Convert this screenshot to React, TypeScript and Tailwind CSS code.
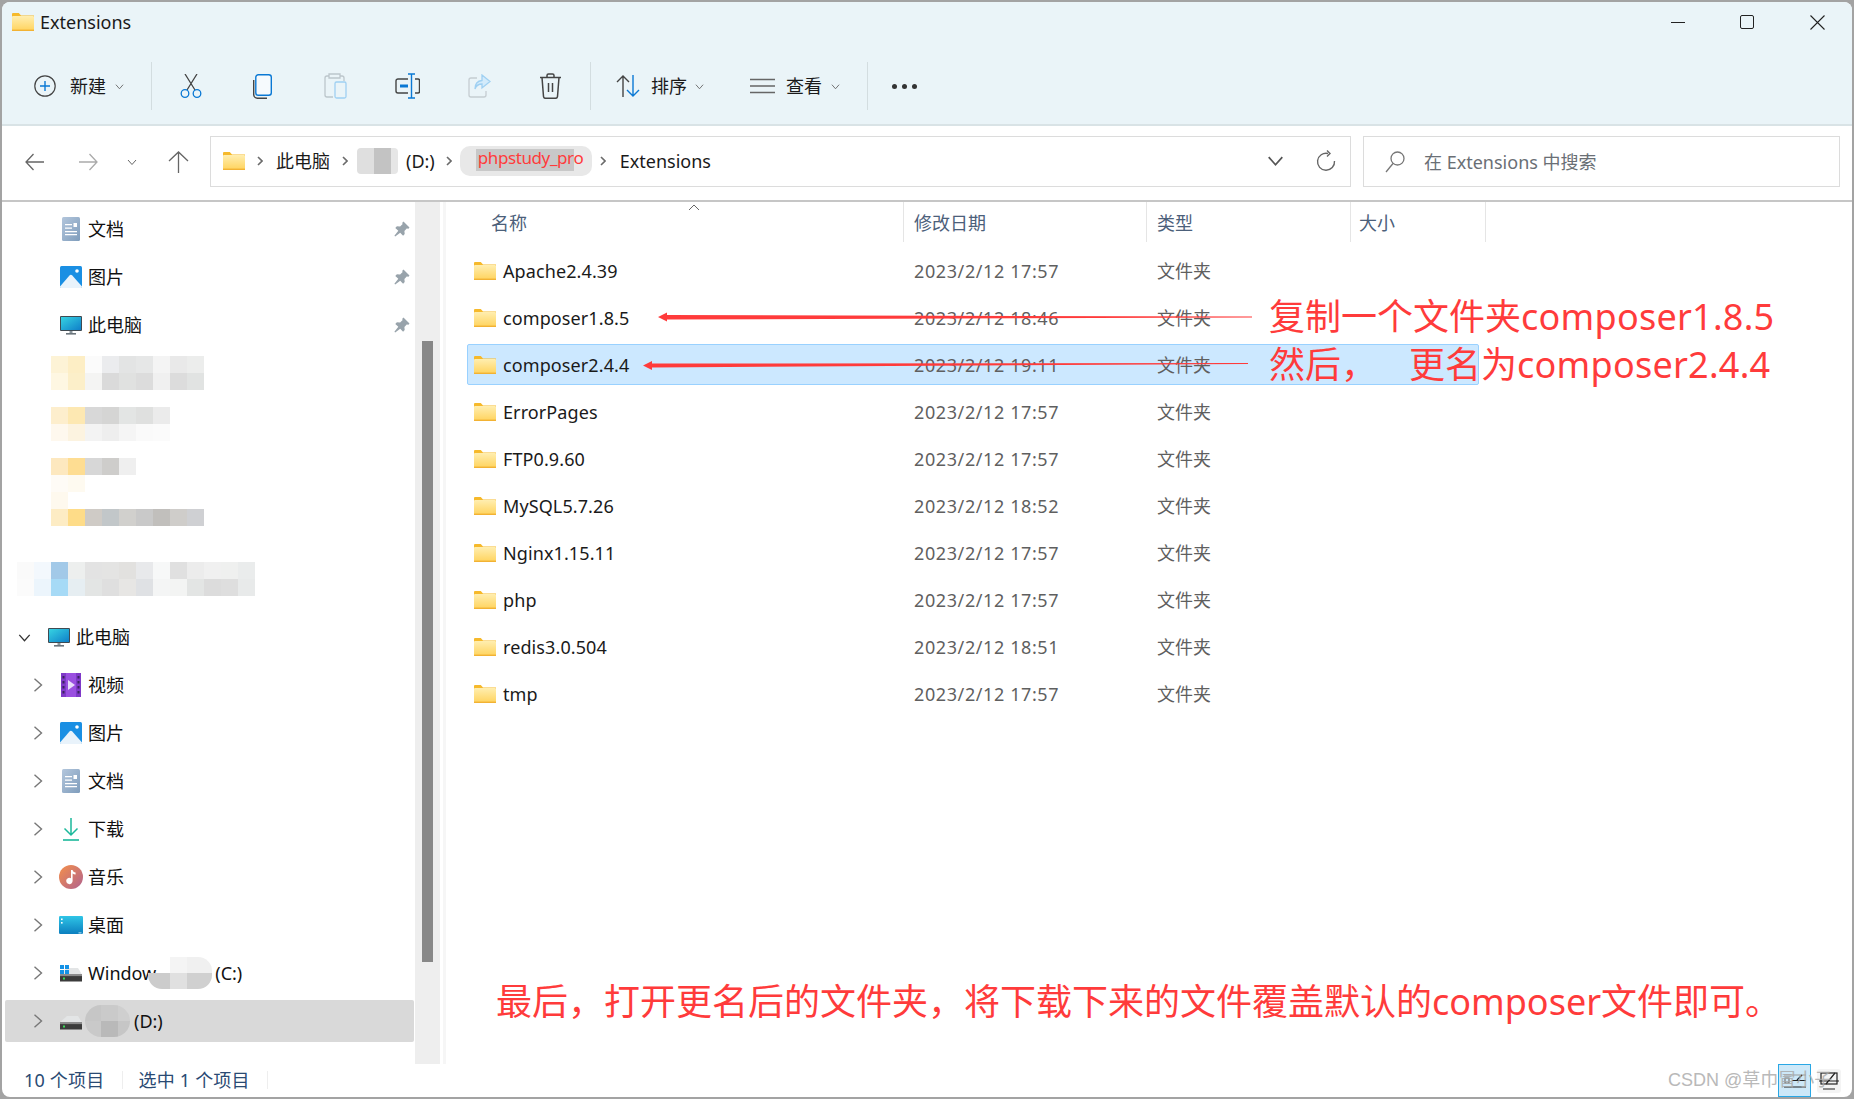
import React from 'react';

const folders = [
  { name: 'Apache2.4.39', date: '2023/2/12 17:57' },
  { name: 'composer1.8.5', date: '2023/2/12 18:46' },
  { name: 'composer2.4.4', date: '2023/2/12 19:11', selected: true },
  { name: 'ErrorPages', date: '2023/2/12 17:57' },
  { name: 'FTP0.9.60', date: '2023/2/12 17:57' },
  { name: 'MySQL5.7.26', date: '2023/2/12 18:52' },
  { name: 'Nginx1.15.11', date: '2023/2/12 17:57' },
  { name: 'php', date: '2023/2/12 17:57' },
  { name: 'redis3.0.504', date: '2023/2/12 18:51' },
  { name: 'tmp', date: '2023/2/12 17:57' },
];

const FolderIcon = ({ className }: { className: string }) => (
  <svg viewBox="0 0 22 18" className={className}>
    <defs>
      <linearGradient id="fld" x1="0" y1="0" x2="0" y2="1">
        <stop offset="0" stopColor="#ffeeb0" />
        <stop offset="1" stopColor="#ffd35c" />
      </linearGradient>
    </defs>
    <path d="M0 1.2C0 .5.5 0 1.2 0h5.600L9 2.500h13V5H0z" fill="#f6b92b" />
    <rect x="0" y="3" width="22" height="15" rx="1" fill="url(#fld)" />
    <rect x="0" y="16.600" width="22" height="1.400" fill="#f2b233" />
  </svg>
);

const Chevron = ({ dir, className }: { dir: 'down' | 'right'; className: string }) => (
  <svg viewBox="0 0 10 10" fill="none" stroke="currentColor" strokeWidth="1" className={className}>
    {dir === 'down' ? <path d="M1 3l4 4.500L9 3" /> : <path d="M2.500 .5L7.500 5l-5 4.500" />}
  </svg>
);

const Crumb = ({ className }: { className: string }) => (
  <svg viewBox="0 0 6 10" fill="none" stroke="#6b6b6b" strokeWidth="1.600" className={`w-[6px] h-[10px] ${className}`}>
    <path d="M1 1l4 4-4 4" />
  </svg>
);

const Pin = () => (
  <svg viewBox="0 0 16 16" className="w-[16px] h-[16px] ml-auto" fill="#98a3ab">
    <path d="M9.500 .5l6 6-1.400 1.400-1.100-.6-2.600 2.600.3 3.200-1.600 1.600-2.900-3L1.200 15.600.4 14.800l3.900-5-3-2.900 1.600-1.600 3.200.3L8.700 3 8.100 1.900z" />
  </svg>
);

const DocIcon = () => (
  <svg viewBox="0 0 18 24" className="w-[18px] h-[24px]">
    <defs>
      <linearGradient id="doc" x1="0" y1="0" x2="1" y2="1">
        <stop offset="0" stopColor="#b3c6dc" />
        <stop offset="1" stopColor="#7f9dbc" />
      </linearGradient>
    </defs>
    <rect width="18" height="24" rx="1.500" fill="url(#doc)" />
    <path d="M3 7h7v1.300H3zM3 10.500h7v1.300H3zM3 14h12v1.300H3zM3 17h12v1.300H3z" fill="#fff" />
    <rect x="11.500" y="6" width="3.500" height="4" fill="#fff" />
  </svg>
);

const PicIcon = () => (
  <svg viewBox="0 0 22 22" className="w-[22px] h-[22px]">
    <rect width="22" height="22" rx="1.500" fill="#1a8fe3" />
    <path d="M0 20.500L9.500 9.500c.8-.9 2-.9 2.800 0L22 20.500V21a1 1 0 01-1 1H1a1 1 0 01-1-1z" fill="#e9f3fb" />
    <circle cx="17" cy="5" r="1.800" fill="#fff" />
  </svg>
);

const PcIcon = () => (
  <svg viewBox="0 0 22 19" className="w-[22px] h-[19px]">
    <defs>
      <linearGradient id="pc" x1="0" y1="0" x2="1" y2="1">
        <stop offset="0" stopColor="#36d3e2" />
        <stop offset="1" stopColor="#0f7fc9" />
      </linearGradient>
    </defs>
    <rect width="22" height="15" rx="1" fill="#3f4a52" />
    <rect x="1" y="1" width="20" height="13" fill="url(#pc)" />
    <rect x="9.500" y="15" width="3" height="2" fill="#8a959c" />
    <rect x="6" y="17" width="10" height="1.600" fill="#6b757c" />
  </svg>
);

const VideoIcon = () => (
  <svg viewBox="0 0 20 24" className="w-[20px] h-[24px]">
    <rect width="20" height="24" rx="1.500" fill="#9a4fe0" />
    <path d="M0 0h5v24H0zM15 0h5v24h-5z" fill="#7f39c8" />
    <path d="M1.500 3h2v2.500h-2zM1.500 8h2v2.500h-2zM1.500 13h2v2.500h-2zM1.500 18h2v2.500h-2zM16.500 3h2v2.500h-2zM16.500 8h2v2.500h-2zM16.500 13h2v2.500h-2zM16.500 18h2v2.500h-2z" fill="#3c2360" />
    <path d="M7 7l7 5-7 5z" fill="#e9dcfb" />
  </svg>
);

const DownloadIcon = () => (
  <svg viewBox="0 0 18 24" fill="none" stroke="#1bb89a" strokeWidth="1.500" className="w-[18px] h-[24px]">
    <path d="M9 1v17M2.500 11.500L9 18l6.500-6.500" />
    <path d="M1 23h16" strokeWidth="1.600" />
  </svg>
);

const MusicIcon = () => (
  <svg viewBox="0 0 24 24" className="w-[24px] h-[24px]">
    <defs>
      <linearGradient id="mus" x1="0" y1="0" x2="1" y2="1">
        <stop offset="0" stopColor="#f5904a" />
        <stop offset="1" stopColor="#b0628f" />
      </linearGradient>
    </defs>
    <circle cx="12" cy="12" r="12" fill="url(#mus)" />
    <path d="M12 5h1.600c.2 1.600 1.400 2.400 3 2.600v1.800c-1.200 0-2.200-.4-3-1v7.600a3.200 3.200 0 11-1.600-2.800z" fill="#fff" />
  </svg>
);

const DesktopIcon = () => (
  <svg viewBox="0 0 24 18" className="w-[24px] h-[18px]">
    <defs>
      <linearGradient id="dsk" x1="0" y1="0" x2="0" y2="1">
        <stop offset="0" stopColor="#2fc5e6" />
        <stop offset="1" stopColor="#0c7fbf" />
      </linearGradient>
    </defs>
    <rect width="24" height="18" rx="1.200" fill="url(#dsk)" />
    <rect x="2" y="2.500" width="1.600" height="1.600" fill="#fff" />
    <rect x="2" y="6" width="1.600" height="1.600" fill="#fff" />
    <rect x="19.500" y="16.400" width="3" height="1" fill="#bfe6f5" />
  </svg>
);

const DriveIcon = ({ windows }: { windows?: boolean }) => (
  <svg viewBox="0 0 22 17" className="w-[22px] h-[17px]">
    <path d="M3 6.500L7 3h11l4 6.500v1H0v-1z" fill="#e3e5e6" />
    <rect y="9.500" width="22" height="7" fill="#3b3b3b" />
    <rect y="9.500" width="22" height="1.600" fill="#8a8a8a" />
    <rect x="3" y="12.500" width="2" height="2" fill="#3bdc58" />
    {windows && <path d="M0 0h4v4H0zM5 0h4v4H5zM0 5h4v4H0zM5 5h4v4H5z" fill="#1492e6" />}
  </svg>
);

const Mosaic = ({ rows, className }: { rows: string[][]; className?: string }) => (
  <div className={className}>
    {rows.map((row, i) => (
      <div key={i} className="flex h-[17px]">
        {row.map((c, j) => (
          <div key={j} className="w-[17px] h-[17px]" style={{ backgroundColor: c }} />
        ))}
      </div>
    ))}
  </div>
);

const NavItem = ({ icon, label, pinned }: { icon: React.ReactNode; label: string; pinned?: boolean }) => (
  <div className="h-[48px] flex items-center pl-[57px] pr-[5px]">
    <div className="w-[24px] flex justify-center">{icon}</div>
    <span className="ml-[5px] text-[#111]">{label}</span>
    {pinned && <Pin />}
  </div>
);

const TreeItem = ({ icon, children, active }: { icon: React.ReactNode; children: React.ReactNode; active?: boolean }) => (
  <div className="h-[48px] flex items-center">
    <div className={`ml-[3px] w-[409px] h-[42px] flex items-center pl-[26px] rounded-[2px] ${active ? 'bg-[#d9d9d9]' : ''}`}>
      <Chevron dir="right" className="w-[14px] h-[14px] text-[#777]" />
      <div className="ml-[14px] w-[24px] flex justify-center">{icon}</div>
      <div className="ml-[5px] flex items-center text-[#111]">{children}</div>
    </div>
  </div>
);

const Sep = () => <div className="w-px h-[48px] bg-[#d3dde0]" />;

export default function App() {
  return (
    <div className="relative w-[1854px] h-[1099px] overflow-hidden bg-[#a3a3a3] p-[2px] font-['Noto_Sans','Noto_Sans_CJK_SC',sans-serif] text-[18px] leading-none">
      <div className="h-full rounded-[8px] overflow-hidden bg-white flex flex-col">
        {/* title + command bar */}
        <div className="h-[124px] bg-[#eaf4f8] border-b-2 border-[#d9e3e6] flex flex-col shrink-0">
          <div className="h-[40px] flex items-center pl-[10px]">
            <FolderIcon className="w-[22px] h-[18px]" />
            <span className="ml-[6px] text-[#1a1a1a]">Extensions</span>
            <div className="ml-auto flex items-center text-[#222]">
              <div className="w-[14px] h-px bg-[#222]" />
              <div className="ml-[55px] w-[14px] h-[14px] border-[1.5px] border-[#222] rounded-[2px]" />
              <svg viewBox="0 0 15 15" stroke="#222" strokeWidth="1.100" className="ml-[56px] mr-[27px] w-[15px] h-[15px]">
                <path d="M.5.5l14 14M14.500.5l-14 14" />
              </svg>
            </div>
          </div>
          <div className="flex-1 flex items-center pl-[32px] pt-[6px]">
            <svg viewBox="0 0 22 22" className="w-[22px] h-[22px]" fill="none">
              <circle cx="11" cy="11" r="10.200" stroke="#444" strokeWidth="1.200" />
              <path d="M11 6v10M6 11h10" stroke="#0a78d4" strokeWidth="1.400" />
            </svg>
            <span className="ml-[14px] text-[#1a1a1a]">新建</span>
            <Chevron dir="down" className="ml-[9px] w-[9px] h-[9px] text-[#666]" />
            <div className="ml-[27px]"><Sep /></div>
            <svg viewBox="0 0 22 24" fill="none" strokeWidth="1.300" className="ml-[28px] w-[22px] h-[24px]">
              <path d="M5 0l10 16M17 0L7 16" stroke="#444" />
              <circle cx="5" cy="19.500" r="3.800" stroke="#0a78d4" />
              <circle cx="17" cy="19.500" r="3.800" stroke="#0a78d4" />
            </svg>
            <svg viewBox="0 0 19 25" fill="none" strokeWidth="1.400" className="ml-[51px] w-[19px] h-[25px]">
              <rect x="2.800" y=".7" width="15.500" height="20.500" rx="2.500" stroke="#0a78d4" fill="#f6fafd" />
              <path d="M.7 6v14.500c0 2 1.600 3.700 3.700 3.700H14" stroke="#444" />
            </svg>
            <svg viewBox="0 0 23 26" fill="none" strokeWidth="1.300" className="ml-[52px] w-[23px] h-[26px]">
              <path d="M5 3H3a2 2 0 00-2 2v17a2 2 0 002 2h6M16 3h2a2 2 0 012 2v3M5 1h11v4H5z" stroke="#bcc6cb" />
              <rect x="11" y="9" width="11" height="16" rx="1.500" stroke="#9fd0f2" />
            </svg>
            <svg viewBox="0 0 25 26" fill="none" strokeWidth="1.400" className="ml-[48px] w-[25px] h-[26px]">
              <path d="M13 6H3a2 2 0 00-2 2v10a2 2 0 002 2h10M20 6h3a1.500 1.500 0 011.500 1.500v11A1.500 1.500 0 0123 20h-3" stroke="#444" />
              <path d="M16.500 1v24M13 1h7M13 25h7" stroke="#0a78d4" />
              <rect x="5" y="11.500" width="8" height="3" fill="#0a78d4" />
            </svg>
            <svg viewBox="0 0 23 24" fill="none" strokeWidth="1.300" className="ml-[48px] w-[23px] h-[24px]">
              <path d="M9 4H3a2 2 0 00-2 2v15a2 2 0 002 2h13a2 2 0 002-2v-4" stroke="#c5cdd1" />
              <path d="M14 1l8 6.500-8 6.500v-4c-4 0-6 2-7 5 0-5 2-8 7-8.500z" stroke="#9fd0f2" fill="#d3ebfb" />
            </svg>
            <svg viewBox="0 0 23 26" fill="none" stroke="#444" strokeWidth="1.500" className="ml-[48px] w-[23px] h-[26px]">
              <path d="M1 4.500h21M8 4.500V2.500a1.500 1.500 0 011.500-1.500h4a1.500 1.500 0 011.500 1.500v2M3 4.500l1.500 19a2 2 0 002 1.800h10a2 2 0 002-1.800l1.500-19M9.500 10v9M13.500 10v9" />
            </svg>
            <div className="ml-[28px]"><Sep /></div>
            <svg viewBox="0 0 24 24" fill="none" strokeWidth="1.400" className="ml-[25px] w-[24px] h-[24px]">
              <path d="M7 23V2M1 8l6-6 6 6" stroke="#444" />
              <path d="M17 1v21M11 16l6 6 6-6" stroke="#0a78d4" />
            </svg>
            <span className="ml-[11px] text-[#1a1a1a]">排序</span>
            <Chevron dir="down" className="ml-[8px] w-[9px] h-[9px] text-[#666]" />
            <svg viewBox="0 0 25 16" stroke="#666" strokeWidth="1.700" className="ml-[46px] w-[25px] h-[16px]">
              <path d="M0 1.500h25M0 8h25M0 14.500h25" />
            </svg>
            <span className="ml-[11px] text-[#1a1a1a]">查看</span>
            <Chevron dir="down" className="ml-[9px] w-[9px] h-[9px] text-[#666]" />
            <div className="ml-[27px]"><Sep /></div>
            <div className="ml-[24px] flex gap-[5px]">
              <div className="w-[5px] h-[5px] rounded-full bg-[#333]" />
              <div className="w-[5px] h-[5px] rounded-full bg-[#333]" />
              <div className="w-[5px] h-[5px] rounded-full bg-[#333]" />
            </div>
          </div>
        </div>

        {/* address row */}
        <div className="h-[76px] shrink-0 border-b-2 border-[#c6c6c6] flex items-start pt-[10px] pl-[23px]">
          <div className="h-[51px] flex items-center">
            <svg viewBox="0 0 19 18" fill="none" stroke="#666" strokeWidth="1.300" className="w-[19px] h-[18px]">
              <path d="M19 9H1M8.500 1L1 9l7.500 8" />
            </svg>
            <svg viewBox="0 0 19 18" fill="none" stroke="#aaa" strokeWidth="1.300" className="ml-[35px] w-[19px] h-[18px]">
              <path d="M0 9h18M10.500 1L18 9l-7.500 8" />
            </svg>
            <Chevron dir="down" className="ml-[29px] w-[10px] h-[10px] text-[#666]" />
            <svg viewBox="0 0 21 22" fill="none" stroke="#666" strokeWidth="1.300" className="ml-[31px] w-[21px] h-[22px]">
              <path d="M10.500 22V1M1 10l9.500-9L20 10" />
            </svg>
          </div>
          <div className="ml-[21px] w-[1141px] h-[51px] pb-[2px] border border-[#dcdcdc] flex items-center text-[#1a1a1a]">
            <FolderIcon className="ml-[12px] w-[22px] h-[18px]" />
            <Crumb className="ml-[12px]" />
            <span className="ml-[13px]">此电脑</span>
            <Crumb className="ml-[12px]" />
            <div className="ml-[9px] w-[41px] h-[26px] flex">
              <div className="w-[17px] bg-[#dfdfdf] rounded-l-[4px]" />
              <div className="w-[17px] bg-[#c3c3c3]" />
              <div className="w-[7px] bg-[#e6e6e6] rounded-r-[4px]" />
            </div>
            <span className="ml-[8px]">(D:)</span>
            <Crumb className="ml-[11px]" />
            <div className="ml-[8px] w-[132px] h-[30px] rounded-[10px] flex items-center overflow-hidden relative bg-[#e8e8e8]">
              <div className="ml-[16px] w-[98px] h-[22px] bg-[#c8c8c8] mb-[2px]" />
              <span className="absolute left-[18px] top-[3px] text-[#ff3b3b] text-[17px] tracking-[-0.4px]">phpstudy_pro</span>
            </div>
            <Crumb className="ml-[8px]" />
            <span className="ml-[14px]">Extensions</span>
            <Chevron dir="down" className="ml-auto w-[17px] h-[17px] text-[#555]" />
            <svg viewBox="0 0 20 22" fill="none" stroke="#666" strokeWidth="1.400" className="ml-[32px] mr-[14px] w-[20px] h-[22px]">
              <path d="M12 3.500A8.500 8.500 0 1018.500 11M11 .5l3 3-3 3" />
            </svg>
          </div>
          <div className="ml-[12px] w-[477px] h-[51px] border border-[#dcdcdc] flex items-center pl-[21px] text-[#6a6f75]">
            <svg viewBox="0 0 20 22" fill="none" stroke="#777" strokeWidth="1.300" className="w-[20px] h-[22px]">
              <circle cx="12.500" cy="7.500" r="6.500" />
              <path d="M8 12.500L1 21" />
            </svg>
            <span className="ml-[19px]">在 Extensions 中搜索</span>
          </div>
        </div>

        {/* sidebar + file list */}
        <div className="flex-1 flex min-h-0">
          <div className="w-[441px] shrink-0 flex">
            <div className="w-[413px] pt-[3px]">
              <NavItem icon={<DocIcon />} label="文档" pinned />
              <NavItem icon={<PicIcon />} label="图片" pinned />
              <NavItem icon={<PcIcon />} label="此电脑" pinned />
              <Mosaic
                className="ml-[49px] mt-[7px]"
                rows={[
                  ['#fdf3d6', '#fdeec5', '#fbfbfb', '#ebecee', '#e3e4e4', '#e6e7e7', '#f4f4f4', '#e9e9e9', '#ecedec'],
                  ['#fef7e2', '#fcefc9', '#f4f4f3', '#dadada', '#e0e1e0', '#dcdcdc', '#f0f0f0', '#dcdcdc', '#e1e3e2'],
                ]}
              />
              <Mosaic
                className="ml-[49px] mt-[17px]"
                rows={[
                  ['#fdeecd', '#fde8b2', '#d8d8d8', '#d5d5d4', '#e3e5e4', '#dfe0df', '#ebebeb'],
                  ['#fef8ee', '#fcf3e0', '#f3f3f3', '#eeeeee', '#f5f5f5', '#fafafa', '#fbfbfb'],
                ]}
              />
              <Mosaic
                className="ml-[49px] mt-[17px]"
                rows={[
                  ['#fde8bf', '#fedd92', '#d7d7d7', '#cecdcb', '#efefef'],
                  ['#fefbf6', '#fefaf0'],
                  ['#fef9ee'],
                  ['#fdecc4', '#fedc88', '#cfcbc6', '#c2c7c9', '#d1d0cd', '#c9c9c9', '#c1bfbc', '#cfcdca', '#cfd0d3'],
                ]}
              />
              <Mosaic
                className="ml-[15px] mt-[36px]"
                rows={[
                  ['#fafafa', '#f3f8fd', '#a2c9e8', '#edefee', '#e3e3e3', '#e4e4e3', '#e2e1df', '#e8e9eb', '#f7f8f8', '#e0e0e0', '#ececec', '#f0f0f0', '#eff0ef', '#eaecec'],
                  ['#fbfbfb', '#ecf5fc', '#a6daf6', '#e6eef2', '#e3e5e4', '#dfdfdf', '#e7e6e4', '#dfe1e4', '#f4f5f5', '#f3f4f3', '#e3e5e4', '#dcdcdc', '#dedede', '#e8eaea'],
                ]}
              />
              <div className="h-[48px] mt-[17px] flex items-center pl-[16px]">
                <Chevron dir="down" className="w-[13px] h-[13px] text-[#333]" />
                <div className="ml-[17px]"><PcIcon /></div>
                <span className="ml-[6px] text-[#111]">此电脑</span>
              </div>
              <TreeItem icon={<VideoIcon />}>视频</TreeItem>
              <TreeItem icon={<PicIcon />}>图片</TreeItem>
              <TreeItem icon={<DocIcon />}>文档</TreeItem>
              <TreeItem icon={<DownloadIcon />}>下载</TreeItem>
              <TreeItem icon={<MusicIcon />}>音乐</TreeItem>
              <TreeItem icon={<DesktopIcon />}>桌面</TreeItem>
              <TreeItem icon={<DriveIcon windows />}>
                <span>Window</span>
                <div className="w-[64px] h-[32px] -ml-[8px] rounded-[14px] overflow-hidden flex flex-col relative">
                  <div className="h-[16px] flex">
                    <div className="w-[22px]" />
                    <div className="w-[17px] bg-[#f4f4f4]" />
                    <div className="w-[25px] bg-[#f0f0f0]" />
                  </div>
                  <div className="h-[16px] flex">
                    <div className="w-[22px] bg-[#cccccc]" />
                    <div className="w-[17px] bg-[#e0e0e0]" />
                    <div className="w-[25px] bg-[#d0d0d0]" />
                  </div>
                </div>
                <span className="ml-[3px]">(C:)</span>
              </TreeItem>
              <TreeItem icon={<DriveIcon />} active>
                <div className="w-[45px] h-[32px] -ml-[3px] rounded-full overflow-hidden flex flex-col">
                  <div className="h-[16px] flex">
                    <div className="w-[16px] bg-[#c6c6c6]" />
                    <div className="w-[17px] bg-[#cacaca]" />
                    <div className="w-[12px] bg-[#cfcfcf]" />
                  </div>
                  <div className="h-[16px] flex">
                    <div className="w-[16px] bg-[#c9c9c9]" />
                    <div className="w-[17px] bg-[#b9b9b9]" />
                    <div className="w-[12px] bg-[#c6c6c6]" />
                  </div>
                </div>
                <span className="ml-[4px]">(D:)</span>
              </TreeItem>
            </div>
            <div className="w-[25px] bg-[#eeeeee] pl-[7px] pt-[139px] pb-[100px]">
              <div className="w-[11px] h-[621px] bg-[#888888]" />
            </div>
          </div>

          <div className="relative flex-1 border-l-[3px] border-[#f6f6f6]">
            <div className="flex h-[40px] text-[#4c607a] items-center">
              <div className="w-[458px] h-full flex items-center pl-[45px] pt-[1px] border-r border-[#e5e5e5]">名称</div>
              <div className="w-[243px] h-full flex items-center pl-[10px] pt-[1px] border-r border-[#e5e5e5]">修改日期</div>
              <div className="w-[204px] h-full flex items-center pl-[10px] pt-[1px] border-r border-[#e5e5e5]">类型</div>
              <div className="w-[135px] h-full flex items-center pl-[8px] pt-[1px] border-r border-[#e5e5e5]">大小</div>
            </div>
            <svg viewBox="0 0 12 7" fill="none" stroke="#666" className="absolute left-[242px] top-[2px] w-[12px] h-[7px]">
              <path d="M1 6l5-5 5 5" />
            </svg>
            <div className="mt-[8px] flex flex-col gap-[6px] ml-[21px] w-[1012px]">
              {folders.map((f) => (
                <div
                  key={f.name}
                  className={`h-[41px] flex items-center border rounded-[2px] ${f.selected ? 'bg-[#cce8ff] border-[#99d1ff]' : 'border-transparent'}`}
                >
                  <div className="w-[446px] flex items-center pl-[6px] text-[#1a1a1a]">
                    <FolderIcon className="w-[22px] h-[18px]" />
                    <span className="ml-[7px] tracking-[0.1px]">{f.name}</span>
                  </div>
                  <div className="w-[243px] text-[#5f5f5f] tracking-[0.6px]">{f.date}</div>
                  <div className="text-[#5f5f5f]">文件夹</div>
                </div>
              ))}
            </div>
          </div>
        </div>

        {/* status bar */}
        <div className="h-[33px] shrink-0 flex items-center pl-[22px] pb-[2px] text-[#2a4a73] tracking-[0.2px]">
          <span>10 个项目</span>
          <div className="ml-[18px] w-px h-[18px] bg-[#eeeeee]" />
          <span className="ml-[15px]">选中 1 个项目</span>
          <div className="ml-[17px] w-px h-[18px] bg-[#eeeeee]" />
          <div className="ml-auto flex items-center h-[33px] mr-[11px] mb-[-2px]">
            <div className="w-[33px] h-full border border-[#29a7e5] bg-[#cde8f8] flex items-center justify-center">
              <svg viewBox="0 0 22 16" fill="none" stroke="#222" strokeWidth="1.200" className="w-[22px] h-[16px]">
                <path d="M0 2h22" stroke="#999" />
                <path d="M8 7.500h14M0 14h22" />
                <path d="M1 5h4v5H1z" stroke="#777" />
                <path d="M18 2l-5 5" />
              </svg>
            </div>
            <div className="ml-[6px] w-[24px] h-[24px] rounded-[3px] bg-[#f4f4f4] flex items-center justify-center">
              <svg viewBox="0 0 20 18" fill="none" stroke="#222" strokeWidth="1.200" className="w-[20px] h-[18px]">
                <rect x="2" y="1" width="16" height="11" />
                <path d="M0 9h20M4 17h12M16 1L7 12" />
              </svg>
            </div>
          </div>
        </div>
      </div>

      {/* red annotations and watermark drawn over the window */}
      <svg viewBox="0 0 1854 1099" className="absolute inset-0 w-[1854px] h-[1099px] pointer-events-none">
        <polygon points="658,317 667,312.500 667,315 1252,316.500 1252,317.500 667,319.500 667,321.500" fill="#ff3b3b" />
        <polygon points="643,365.500 652,361 652,363.500 1248,363 1248,364 652,367.500 652,370" fill="#ff3b3b" />
      </svg>
      <div className="absolute left-[1269px] top-[293px] text-[36px] leading-[48px] text-[#ff3b3b] whitespace-nowrap">
        <div>复制一个文件夹<span className="tracking-[0.25px]">composer1.8.5</span></div>
        <div>然后，<span className="ml-[32px]">更名为<span className="tracking-[0.25px]">composer2.4.4</span></span></div>
      </div>
      <div className="absolute left-[496px] top-[978px] text-[36px] leading-[48px] text-[#ff3b3b] whitespace-nowrap">
        最后，打开更名后的文件夹，将下载下来的文件覆盖默认的composer文件即可。
      </div>
      <div className="absolute left-[1668px] top-[1071px] text-[18px] text-[#a8a8a8] opacity-80 whitespace-nowrap font-['Liberation_Sans','Noto_Sans_CJK_SC',sans-serif]">
        CSDN @草巾冒小子
      </div>
    </div>
  );
}
